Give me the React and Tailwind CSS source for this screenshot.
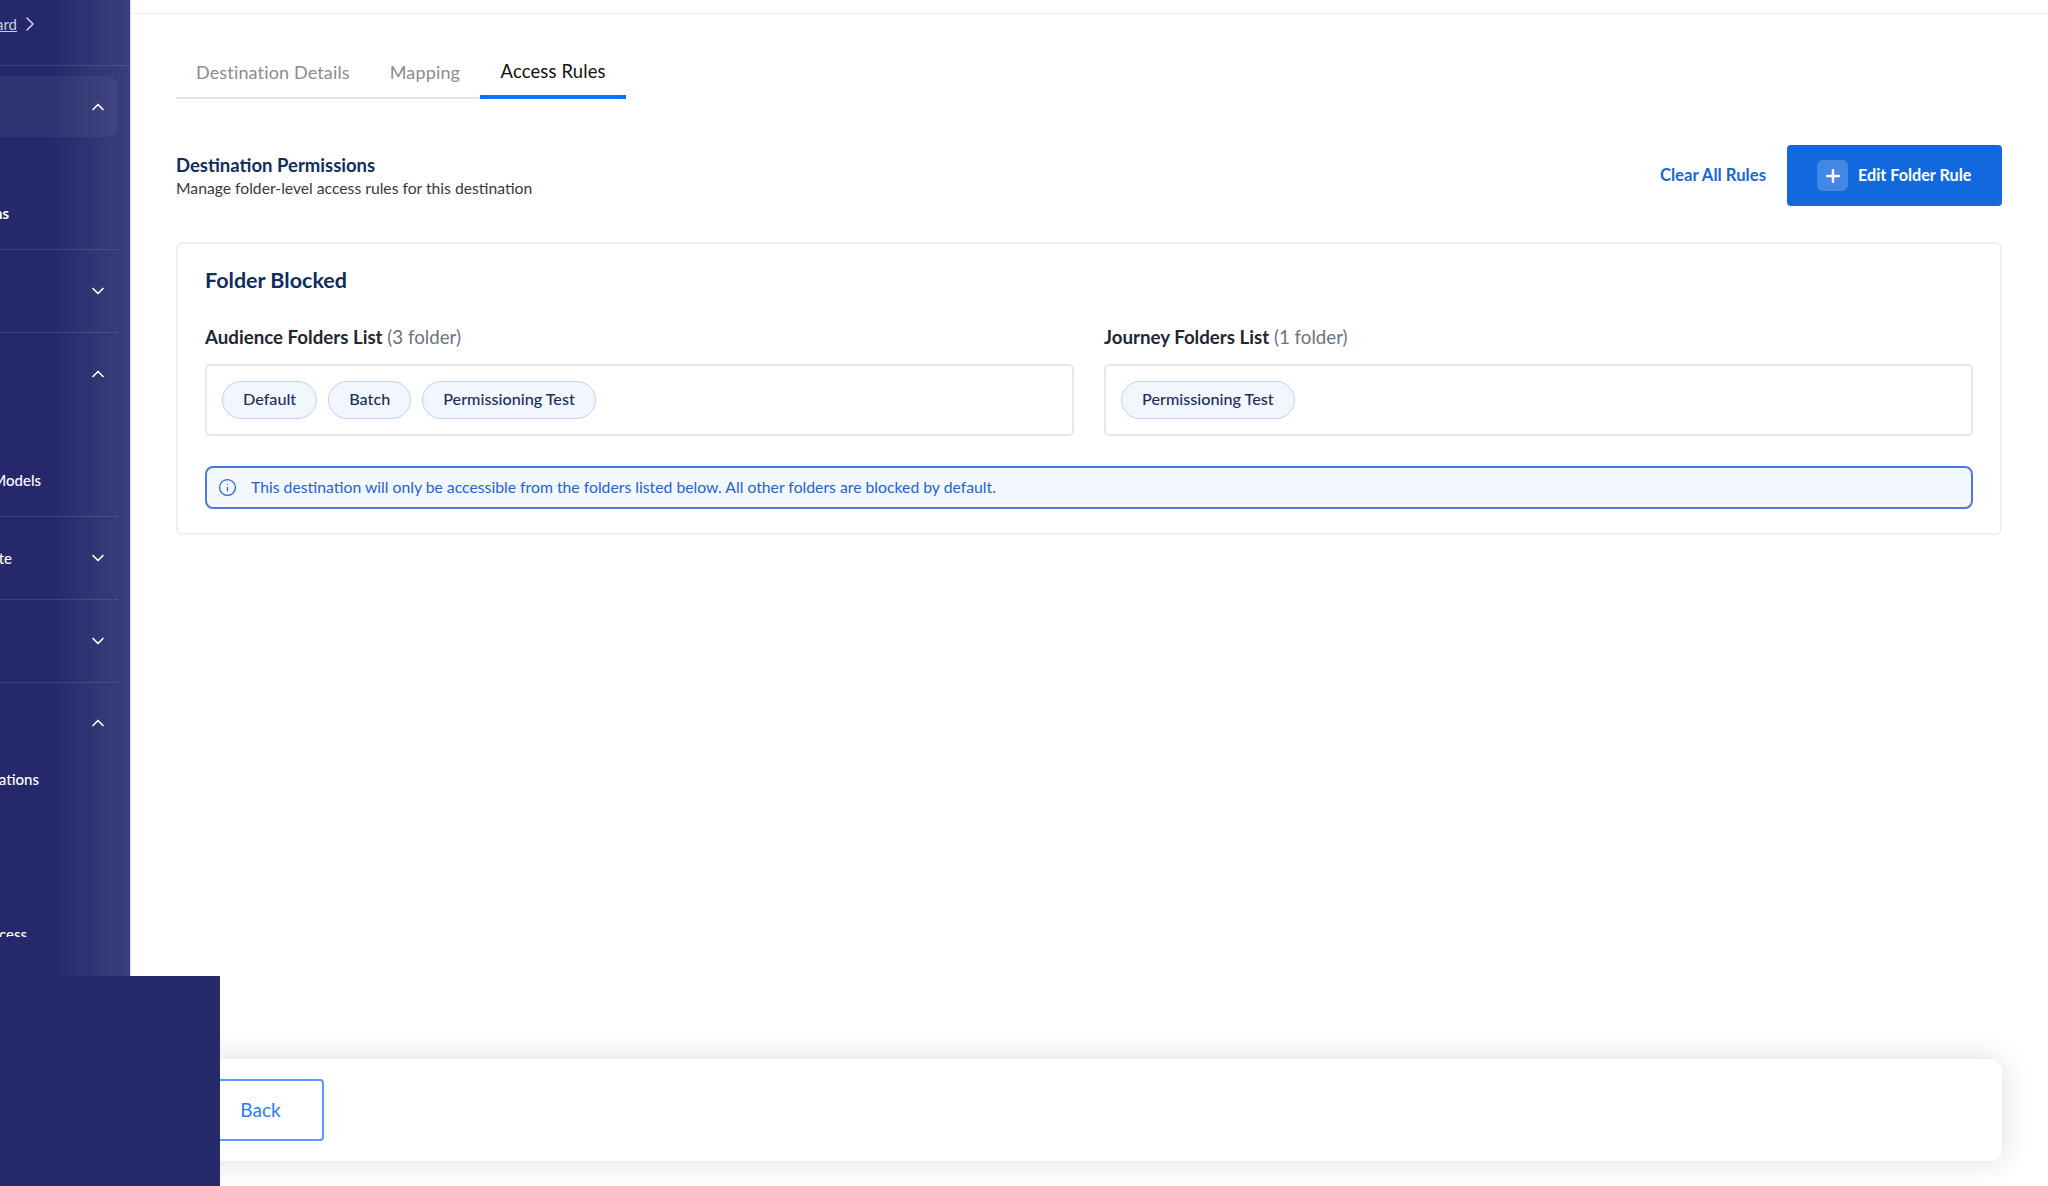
import React from "react";
import { ChevronDown, ChevronRight, ChevronUp, Info, Plus } from "lucide-react";

const font = { fontFamily: '"Lato", "Open Sans", sans-serif' };

const folders = [
  { title: "Audience Folders List", count: "(3 folder)", items: ["Default", "Batch", "Permissioning Test"] },
  { title: "Journey Folders List", count: "(1 folder)", items: ["Permissioning Test"] },
];

function SideChevron({ open }) {
  const Icon = open ? ChevronUp : ChevronDown;
  return <Icon size={20} strokeWidth={2} className="text-white shrink-0" />;
}

function SideHeader({ className, open, label, labelWidth }) {
  return (
    <div className={`flex items-center justify-between pr-[10px] ${className}`}>
      {label ? (
        <span className={`flex justify-end whitespace-nowrap text-[15px] font-medium text-white ${labelWidth}`}>{label}</span>
      ) : (
        <span />
      )}
      <SideChevron open={open} />
    </div>
  );
}

function Sidebar() {
  return (
    <aside className="w-[131px] h-screen shrink-0 overflow-hidden border-r border-[#dcdcf0] bg-linear-to-r from-[#25296b] from-40% to-[#3a3f7d]">
      <div className="h-[66px] border-b border-white/10">
        <div className="flex h-[48px] items-center">
          <span className="flex w-[17px] justify-end whitespace-nowrap text-[15px] text-[#c9cbe0] underline">Dashboard</span>
          <ChevronRight size={24} strokeWidth={1.6} className="ml-[1px] text-[#c9cbe0]" />
        </div>
      </div>
      <nav className="h-[871px] w-[118px] overflow-hidden">
        <div className="h-[184px] border-b border-white/10 pt-[10px]">
          <SideHeader className="h-[61px] rounded-r-xl bg-white/5" open />
          <div className="mt-[56px] flex h-[40px] items-center">
            <span className="flex w-[9px] justify-end whitespace-nowrap text-[15px] font-bold text-white">Destinations</span>
          </div>
        </div>
        <SideHeader className="h-[83px] border-b border-white/10" />
        <div className="h-[184px] border-b border-white/10">
          <SideHeader className="h-[82px]" open />
          <div className="mt-[45px] flex h-[40px] items-center">
            <span className="flex w-[41px] justify-end whitespace-nowrap text-[15px] font-medium text-white">Data Models</span>
          </div>
        </div>
        <SideHeader className="h-[83px] border-b border-white/10" label="Activate" labelWidth="w-[12px]" />
        <SideHeader className="h-[83px] border-b border-white/10" />
        <SideHeader className="h-[80px]" open />
        <div className="mt-[3px] flex h-[26px] items-center">
          <span className="flex w-[39px] justify-end whitespace-nowrap text-[15px] font-medium text-white">Integrations</span>
        </div>
        <div className="mt-[129px] flex h-[26px] items-center">
          <span className="flex w-[27px] justify-end whitespace-nowrap text-[15px] font-medium text-white">Access</span>
        </div>
      </nav>
    </aside>
  );
}

function Tabs() {
  return (
    <div className="mt-[36px] flex h-[49px] w-fit border-b-2 border-[#e1e4e8] text-[18px] tracking-[0.15px]">
      <div className="flex items-center px-5 pb-[3px] text-[#8c8c8c]">Destination Details</div>
      <div className="flex items-center px-5 pb-[3px] text-[#8c8c8c]">Mapping</div>
      <div className="-mb-[2px] flex w-[146px] items-center justify-center whitespace-nowrap border-b-[4px] border-[#0f6fff] pb-[1px] text-[18.4px] text-[#111111]">Access Rules</div>
    </div>
  );
}

function FolderList({ title, count, items }) {
  return (
    <div>
      <div className="text-[18.7px] leading-6 text-[#6b7280]">
        <span className="font-bold text-[#1f2733]">{title}</span> {count}
      </div>
      <div className="mt-[15px] flex h-[72px] items-center gap-[11px] rounded-[5px] border-2 border-[#e6e8ec] px-[15px]">
        {items.map((item) => (
          <span
            key={item}
            className="flex h-[38px] items-center rounded-full border border-[#bdd1f5] bg-[#f2f6fe] px-5 pb-[1px] text-[16.2px] font-medium text-[#1a2f5e]"
          >
            {item}
          </span>
        ))}
      </div>
    </div>
  );
}

export default function App() {
  return (
    <div className="relative flex h-screen overflow-hidden bg-white" style={font}>
      <Sidebar />
      <main className="flex h-screen min-w-0 flex-1 flex-col">
        <div className="h-[14px] shrink-0 border-b border-[#eceff3]" />
        <div className="flex flex-1 flex-col pl-[45px] pr-[46px]">
          <Tabs />

          <div className="mt-[46px] flex h-[61px] items-center justify-between">
            <div>
              <h2 className="text-[18.5px] font-bold leading-6 text-[#0f2d5f]">Destination Permissions</h2>
              <p className="text-[15.7px] leading-[22px] text-[#333a45]">Manage folder-level access rules for this destination</p>
            </div>
            <div className="flex h-full items-center gap-[21px]">
              <button className="pt-[1px] text-[16.7px] font-bold text-[#1a66d6]">Clear All Rules</button>
              <button className="flex h-full w-[215px] items-center rounded-[4px] bg-[#1269dd] pl-[30px] text-[16.2px] font-bold text-white">
                <span className="mr-[10px] flex h-[31px] w-[31px] items-center justify-center rounded-[6px] bg-white/20">
                  <Plus size={20} strokeWidth={3} />
                </span>
                Edit Folder Rule
              </button>
            </div>
          </div>

          <section className="mt-[36px] rounded-[6px] border-2 border-[#eef0f4] px-[27px] pb-[24px] pt-[22px]">
            <h3 className="text-[21.5px] font-bold leading-7 text-[#0f2d5f]">Folder Blocked</h3>
            <div className="mt-[31px] grid grid-cols-2 gap-[30px]">
              {folders.map((folder) => (
                <FolderList key={folder.title} {...folder} />
              ))}
            </div>
            <div className="mt-[30px] flex h-[43px] items-center rounded-[8px] border-2 border-[#4a7bdc] bg-[#f3f7fe] pb-[1px] pl-[11px] text-[15.75px] text-[#2464d0]">
              <Info size={19} strokeWidth={1.6} className="mr-[14px] shrink-0" />
              This destination will only be accessible from the folders listed below. All other folders are blocked by default.
            </div>
          </section>

          <div className="mb-[25px] mt-auto flex h-[102px] items-center rounded-xl bg-white pl-[21px] shadow-[0_0_30px_rgba(0,0,0,0.14)]">
            <button className="h-[62px] w-[127px] rounded-[4px] border-2 border-[#5a9bff] text-[19px] text-[#2a7bff]">Back</button>
          </div>
        </div>
      </main>
      <div className="absolute bottom-0 left-0 h-[210px] w-[220px] bg-[#252a6b]" />
    </div>
  );
}
